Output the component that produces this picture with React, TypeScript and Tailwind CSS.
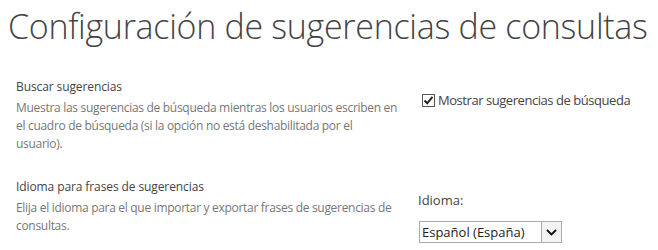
import React from "react";

export default function App() {
  const font = { fontFamily: '"Open Sans", "Noto Sans", sans-serif' };
  return (
    <div className="w-[658px] h-[250px] bg-white overflow-hidden" style={font}>
      <h1 className="pl-[8px] pt-[4px] text-[34px] leading-[44px] font-light text-[#444] tracking-[-0.3px] whitespace-nowrap">
        Configuración de sugerencias de consultas
      </h1>
      <div className="grid grid-cols-[418px_1fr] mt-[30px]">
        <div className="pl-[16px] pr-[18px]">
          <div className="text-[12px] leading-[18px] text-[#444] tracking-[-0.1px]">Buscar sugerencias</div>
          <div className="mt-[3px] text-[12px] leading-[18px] text-[#777] tracking-[-0.3px]">
            Muestra las sugerencias de búsqueda mientras los usuarios escriben en el cuadro de búsqueda (si la opción no está deshabilitada por el usuario).
          </div>
        </div>
        <div className="pt-[12px]">
          <label className="flex items-center gap-[3px] ml-[4px] text-[13px] leading-[20px] text-[#444] tracking-[-0.45px] whitespace-nowrap">
            <span className="w-[13px] h-[13px] border border-[#555] bg-white flex items-center justify-center">
              <svg width="11" height="11" viewBox="0 0 11 11">
                <path d="M1.5 5.5 L4.2 8.3 L9.5 1.8" fill="none" stroke="#222" strokeWidth="2" />
              </svg>
            </span>
            Mostrar sugerencias de búsqueda
          </label>
        </div>
        <div className="pl-[16px] pr-[18px] mt-[25px]">
          <div className="text-[12px] leading-[18px] text-[#444] tracking-[-0.1px]">Idioma para frases de sugerencias</div>
          <div className="mt-[3px] text-[12px] leading-[18px] text-[#777] tracking-[-0.3px]">
            Elija el idioma para el que importar y exportar frases de sugerencias de consultas.
          </div>
        </div>
        <div className="mt-[38px]">
          <div className="text-[13px] leading-[18px] text-[#444]">Idioma:</div>
          <div className="mt-[12px] ml-[1px] w-[143px] h-[22px] border border-[#ababab] flex items-stretch bg-white">
            <span className="flex-1 pl-[2px] text-[13px] leading-[20px] text-[#222] whitespace-nowrap overflow-hidden">Español (España)</span>
            <span className="w-[20px] border-l border-[#ababab] bg-[#f3f3f3] flex items-center justify-center">
              <svg width="11" height="7" viewBox="0 0 11 7">
                <path d="M1 1 L5.5 5.5 L10 1" fill="none" stroke="#111" strokeWidth="1.8" />
              </svg>
            </span>
          </div>
        </div>
      </div>
    </div>
  );
}
